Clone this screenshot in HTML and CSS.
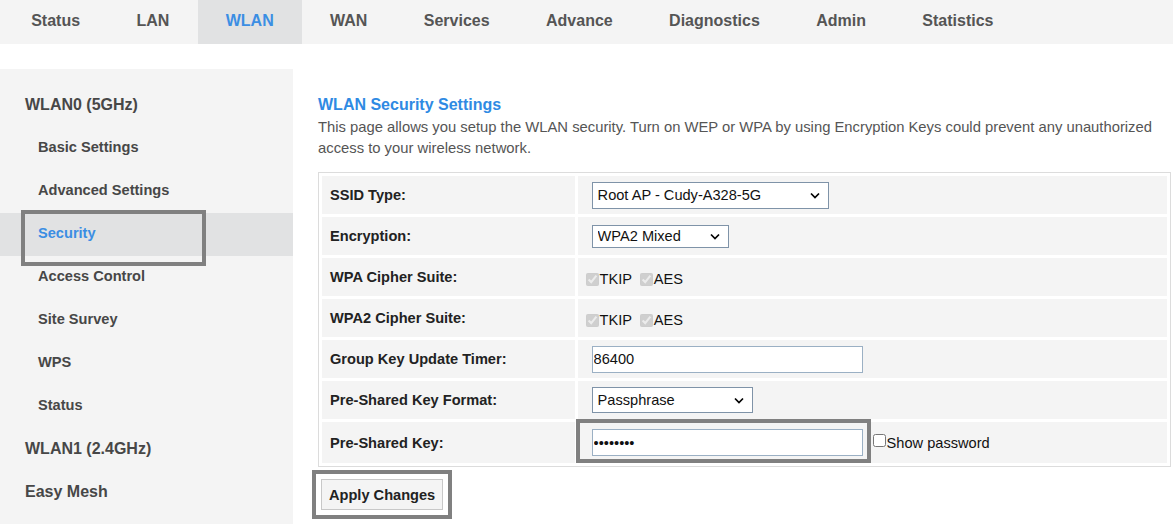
FILE: index.html
```html
<!DOCTYPE html>
<html>
<head>
<meta charset="utf-8">
<link rel="stylesheet" href="styles.css">
</head>
<body>
<nav class="topnav">
  <a class="tab">Status</a>
  <a class="tab">LAN</a>
  <a class="tab active">WLAN</a>
  <a class="tab">WAN</a>
  <a class="tab">Services</a>
  <a class="tab">Advance</a>
  <a class="tab">Diagnostics</a>
  <a class="tab">Admin</a>
  <a class="tab">Statistics</a>
</nav>
<div class="layout">
  <aside class="sidebar">
    <div class="side-head">WLAN0 (5GHz)</div>
    <div class="side-sub">Basic Settings</div>
    <div class="side-sub">Advanced Settings</div>
    <div class="side-sub active">Security</div>
    <div class="side-sub">Access Control</div>
    <div class="side-sub">Site Survey</div>
    <div class="side-sub">WPS</div>
    <div class="side-sub">Status</div>
    <div class="side-head">WLAN1 (2.4GHz)</div>
    <div class="side-head">Easy Mesh</div>
  </aside>
  <main class="main">
    <h1 class="title">WLAN Security Settings</h1>
    <p class="desc">This page allows you setup the WLAN security. Turn on WEP or WPA by using Encryption Keys could prevent any unauthorized access to your wireless network.</p>
    <table class="form">
      <tr>
        <td class="label">SSID Type:</td>
        <td class="value"><select class="sel sel-ssid"><option>Root AP - Cudy-A328-5G</option></select></td>
      </tr>
      <tr>
        <td class="label">Encryption:</td>
        <td class="value"><select class="sel sel-enc"><option>WPA2 Mixed</option></select></td>
      </tr>
      <tr>
        <td class="label">WPA Cipher Suite:</td>
        <td class="value chk"><label><input type="checkbox" checked disabled>TKIP</label> <label><input type="checkbox" checked disabled>AES</label></td>
      </tr>
      <tr>
        <td class="label">WPA2 Cipher Suite:</td>
        <td class="value chk"><label><input type="checkbox" checked disabled>TKIP</label> <label><input type="checkbox" checked disabled>AES</label></td>
      </tr>
      <tr>
        <td class="label">Group Key Update Timer:</td>
        <td class="value"><input class="txt" type="text" value="86400"></td>
      </tr>
      <tr>
        <td class="label">Pre-Shared Key Format:</td>
        <td class="value"><select class="sel sel-fmt"><option>Passphrase</option></select></td>
      </tr>
      <tr class="last">
        <td class="label">Pre-Shared Key:</td>
        <td class="value"><span class="marked"><input class="txt" type="password" value="12345678"></span><label class="show"><input type="checkbox">Show password</label></td>
      </tr>
    </table>
    <button class="apply">Apply Changes</button>
  </main>
</div>
</body>
</html>
```

FILE: styles.css
```css
* { box-sizing: border-box; }
html, body { margin: 0; padding: 0; background: #fff; }
body {
  font-family: "Liberation Sans", Arial, sans-serif;
  color: #333;
  width: 1173px;
  height: 524px;
  overflow: hidden;
}
.topnav {
  display: flex;
  height: 44px;
  background: #f4f4f4;
  padding-left: 3px;
}
.tab {
  padding: 0 28.2px;
  line-height: 42px;
  font-size: 16px;
  font-weight: bold;
  color: #555;
}
.tab.active {
  background: #e1e2e3;
  color: #3b8ee3;
}
.layout {
  display: flex;
  margin-top: 25px;
  height: 455px;
}
.sidebar {
  width: 293px;
  flex-shrink: 0;
  background: #f4f4f4;
  padding-top: 15px;
}
.side-head, .side-sub {
  height: 43px;
  line-height: 41px;
  font-weight: bold;
  color: #474747;
}
.side-head { padding-left: 25px; font-size: 16px; line-height: 42px; }
.side-sub { padding-left: 38px; font-size: 14.6px; }
.side-sub.active {
  background: #e1e2e3;
  color: #3b8ee3;
  position: relative;
}
.side-sub.active::after {
  content: "";
  position: absolute;
  left: 21px;
  top: -3px;
  width: 177px;
  height: 48px;
  border: 4px solid #808080;
}
.main {
  flex: 1;
  padding: 25px 2px 0 25px;
}
.title {
  margin: 0;
  font-size: 16px;
  line-height: 21px;
  color: #2f8ae3;
}
.desc {
  margin: 2px 0 13px;
  font-size: 14.8px;
  line-height: 21px;
  color: #555;
}
.form {
  width: 100%;
  border: 1px solid #dcdcdc;
  border-spacing: 3px;
}
.form td {
  background: #f4f4f4;
  height: 38px;
  vertical-align: middle;
  padding: 0;
}
.form tr.last td { height: 41px; }
.label {
  width: 30%;
  padding-left: 8px !important;
  font-size: 14.6px;
  font-weight: bold;
  color: #222;
}
.value {
  padding-left: 4px !important;
  font-size: 14.6px;
  color: #111;
}
.chk { padding-top: 4px !important; }
.chk input { margin: 3px 1px 3px 4px; vertical-align: -2px; }
.sel {
  appearance: none;
  -webkit-appearance: none;
  margin-left: 10px;
  border: 1px solid #7f93a8;
  border-radius: 0;
  background: #fff url("data:image/svg+xml,%3Csvg xmlns='http://www.w3.org/2000/svg' width='10' height='7'%3E%3Cpath d='M1 1.5l4 4 4-4' fill='none' stroke='%23000' stroke-width='1.7'/%3E%3C/svg%3E") no-repeat right 8px center;
  font-family: "Liberation Sans", Arial, sans-serif;
  font-size: 14.6px;
  color: #111;
  padding: 0 0 0 5px;
  vertical-align: middle;
}
.sel-ssid { width: 237px; height: 27px; }
.sel-enc { width: 137px; height: 23px; }
.sel-fmt { width: 161px; height: 26px; }
.txt {
  margin-left: 10px;
  width: 271px;
  height: 27px;
  border: 1px solid #9bb0c4;
  border-radius: 0;
  padding: 0 1px;
  font-family: "Liberation Sans", Arial, sans-serif;
  font-size: 14.6px;
  color: #111;
  vertical-align: middle;
  background: #fff;
}
.marked {
  position: relative;
  display: inline-block;
  vertical-align: middle;
}
.marked::after {
  content: "";
  position: absolute;
  left: -6px;
  right: -8px;
  top: -10px;
  bottom: -7px;
  border: 4px solid #808080;
  pointer-events: none;
}
.show {
  font-size: 14.6px;
  color: #111;
  vertical-align: middle;
}
.show input { margin: 0 1px 0 10px; vertical-align: 1px; }
.apply {
  margin: 12px 0 0 3px;
  padding: 6px 7px;
  height: 31px;
  background: #f4f4f4;
  border: 1px solid #c8c8c8;
  border-radius: 0;
  font-family: "Liberation Sans", Arial, sans-serif;
  font-size: 14.6px;
  font-weight: bold;
  color: #222;
  outline: 4px solid #808080;
  outline-offset: 5px;
}
```
